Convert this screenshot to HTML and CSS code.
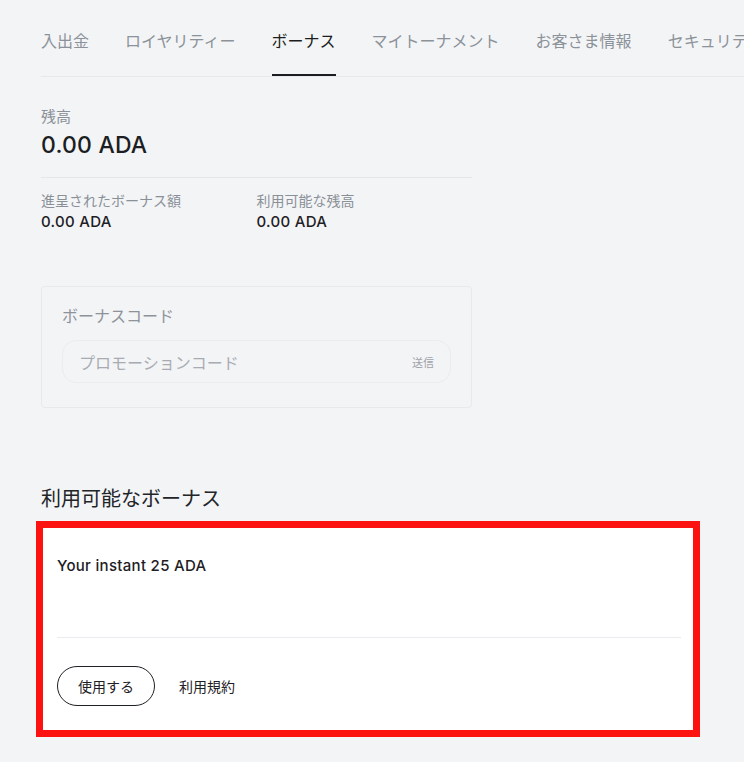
FILE: index.html
```html
<!DOCTYPE html>
<html lang="ja">
<head>
<meta charset="utf-8">
<title>ボーナス</title>
<link rel="stylesheet" href="styles.css">
</head>
<body>
<div class="page">
  <nav class="tabs">
    <a class="tab">入出金</a>
    <a class="tab">ロイヤリティー</a>
    <a class="tab active">ボーナス</a>
    <a class="tab">マイトーナメント</a>
    <a class="tab">お客さま情報</a>
    <a class="tab">セキュリティ</a>
  </nav>

  <section class="balance">
    <div class="label">残高</div>
    <div class="big">0.00 ADA</div>
    <div class="split">
      <div class="cell">
        <div class="small-label">進呈されたボーナス額</div>
        <div class="value">0.00 ADA</div>
      </div>
      <div class="cell">
        <div class="small-label">利用可能な残高</div>
        <div class="value">0.00 ADA</div>
      </div>
    </div>
  </section>

  <section class="code-box">
    <div class="code-label">ボーナスコード</div>
    <div class="code-input">
      <span class="placeholder">プロモーションコード</span>
      <span class="send">送信</span>
    </div>
  </section>

  <h2 class="heading">利用可能なボーナス</h2>
  <div class="card">
    <div class="card-title">Your instant 25 ADA</div>
    <div class="card-actions">
      <button class="use-btn">使用する</button>
      <a class="terms">利用規約</a>
    </div>
  </div>
</div>
</body>
</html>
```
FILE: styles.css
```css
* { box-sizing: border-box; }
html, body {
  margin: 0;
  background: #f3f4f6;
  font-family: "Inter", "Noto Sans CJK JP", sans-serif;
  color: #1d2024;
}
.page {
  padding-left: 41px;
  overflow: hidden;
  height: 762px;
}
.tabs {
  display: flex;
  gap: 36px;
  border-bottom: 1px solid #e6e8eb;
  white-space: nowrap;
  overflow: hidden;
}
.tab {
  flex: none;
  font-size: 16px;
  line-height: 24px;
  padding: 28px 0 22px;
  border-bottom: 2px solid transparent;
  color: #8c9299;
  font-family: "Noto Sans CJK JP", sans-serif;
}
.tab.active {
  color: #1b1d20;
  border-bottom-color: #1b1d20;
}
.balance {
  width: 431px;
  padding-top: 29px;
}
.label {
  font-family: "Noto Sans CJK JP", sans-serif;
  font-size: 15px;
  line-height: 20px;
  color: #8a9097;
}
.big {
  margin-top: 4px;
  font-size: 23px;
  line-height: 30px;
  font-weight: 500;
  letter-spacing: 0.2px;
  color: #1b1e22;
  padding-bottom: 17px;
  border-bottom: 1px solid #e4e6e9;
}
.split {
  display: flex;
  padding-top: 13px;
}
.cell { width: 216px; }
.small-label {
  font-family: "Noto Sans CJK JP", sans-serif;
  font-size: 14px;
  line-height: 18px;
  color: #8a9097;
}
.value {
  margin-top: 3px;
  font-size: 15px;
  line-height: 20px;
  font-weight: 500;
  letter-spacing: 0.3px;
  color: #1d2024;
}
.code-box {
  margin-top: 54px;
  width: 431px;
  border: 1px solid #e7e9ec;
  border-radius: 4px;
  padding: 17px 20px 24px;
}
.code-label {
  font-family: "Noto Sans CJK JP", sans-serif;
  font-size: 16px;
  line-height: 22px;
  color: #8d9399;
}
.code-input {
  margin-top: 14px;
  height: 43px;
  border: 1px solid #eaecee;
  border-radius: 14px;
  display: flex;
  align-items: center;
  justify-content: space-between;
  padding: 0 16px 0 16px;
}
.placeholder {
  font-family: "Noto Sans CJK JP", sans-serif;
  font-size: 16px;
  color: #a7acb2;
}
.send {
  font-family: "Noto Sans CJK JP", sans-serif;
  font-size: 11px;
  color: #9ea3a9;
}
.heading {
  margin: 77px 0 0;
  font-family: "Noto Sans CJK JP", sans-serif;
  font-size: 20px;
  line-height: 26px;
  font-weight: 400;
  color: #222528;
}
.card {
  margin-top: 10px;
  margin-left: -5px;
  width: 664px;
  border: 7px solid #fd1212;
  background: #fff;
  padding: 28px 12px 24px 14px;
}
.card-title {
  font-size: 15px;
  line-height: 20px;
  font-weight: 500;
  letter-spacing: 0.3px;
  color: #1d2024;
  height: 82px;
  border-bottom: 1px solid #e9ebee;
}
.card-actions {
  display: flex;
  align-items: center;
  gap: 24px;
  padding-top: 28px;
}
.use-btn {
  width: 98px;
  height: 40px;
  border: 1px solid #1d2024;
  border-radius: 20px;
  background: #fff;
  font-family: "Noto Sans CJK JP", sans-serif;
  font-size: 14px;
  color: #1d2024;
  padding: 0;
}
.terms {
  font-family: "Noto Sans CJK JP", sans-serif;
  font-size: 14px;
  color: #1d2024;
}
```
